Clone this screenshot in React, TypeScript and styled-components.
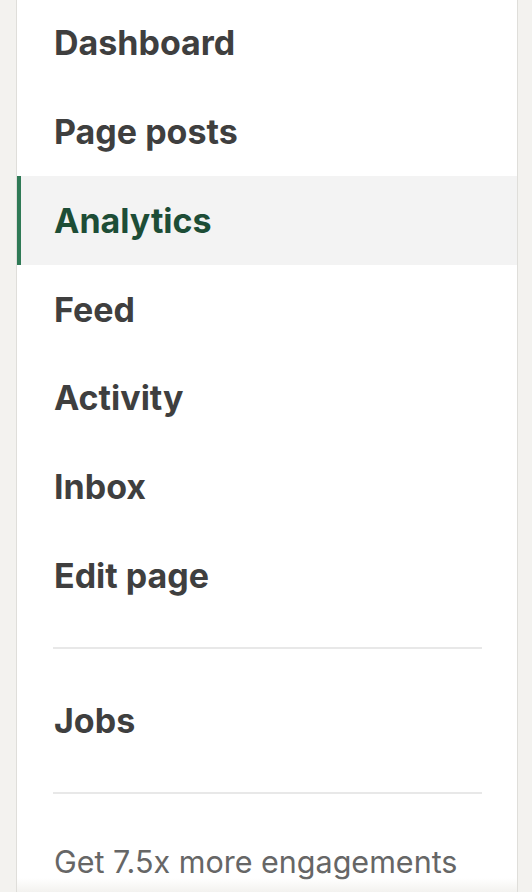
import styled, { createGlobalStyle } from "styled-components";

const GlobalStyle = createGlobalStyle`
  html, body {
    margin: 0;
    padding: 0;
    background: #f3f2ef;
    font-family: Inter, "Liberation Sans", Arial, sans-serif;
    overflow: hidden;
  }
`;

interface INavItem {
  name: string;
  active?: boolean;
}

const NAV: INavItem[] = [
  { name: "Dashboard" },
  { name: "Page posts" },
  { name: "Analytics", active: true },
  { name: "Feed" },
  { name: "Activity" },
  { name: "Inbox" },
  { name: "Edit page" },
];

const Page = styled.div`
  height: 892px;
  padding-left: 16px;
  overflow: hidden;
`;

const Panel = styled.aside`
  position: relative;
  width: 500px;
  height: 892px;
  background: #fff;
  border-left: 1px solid #dfdeda;
  border-right: 1px solid #dfdeda;
  overflow: hidden;

  &::after {
    content: "";
    position: absolute;
    left: 0;
    right: 0;
    bottom: 0;
    height: 14px;
    background: linear-gradient(rgba(243, 242, 239, 0), #f3f2ef);
  }
`;

const NavList = styled.ul`
  list-style: none;
  margin: 0;
  padding: 0;
`;

// the list is scrolled a touch past its top in the screenshot
const MainNav = styled(NavList)`
  margin-top: -1.5px;
`;

const NavRow = styled.li<{ $active?: boolean }>`
  display: flex;
  align-items: center;
  height: 88.75px;
  padding-left: ${(p) => (p.$active ? "33px" : "37px")};
  border-left: ${(p) => (p.$active ? "4px solid #2f7a56" : "none")};
  background: ${(p) => (p.$active ? "#f3f3f3" : "transparent")};
  color: ${(p) => (p.$active ? "#1d4d36" : "#3f3f3f")};
  font-size: 34px;
  font-weight: 700;
  cursor: pointer;
`;

const Divider = styled.hr<{ $top: number }>`
  margin: ${(p) => p.$top}px 35px 0 36px;
  border: none;
  height: 2px;
  background: #e8e8e8;
`;

const Section = styled.div`
  padding: 27px 0;
`;

const Promo = styled.p`
  margin: 0;
  padding: 50px 0 0 37px;
  font-size: 30.5px;
  line-height: 1.15;
  color: #666;
  white-space: nowrap;
`;

const App = () => {
  return (
    <Page>
      <GlobalStyle />
      <Panel>
        <MainNav>
          {NAV.map((item) => (
            <NavRow key={item.name} $active={item.active}>
              {item.name}
            </NavRow>
          ))}
        </MainNav>
        <Divider $top={27.5} />
        <Section>
          <NavList>
            <NavRow>Jobs</NavRow>
          </NavList>
        </Section>
        <Divider $top={0} />
        <Promo>Get 7.5x more engagements</Promo>
      </Panel>
    </Page>
  );
};

export default App;
